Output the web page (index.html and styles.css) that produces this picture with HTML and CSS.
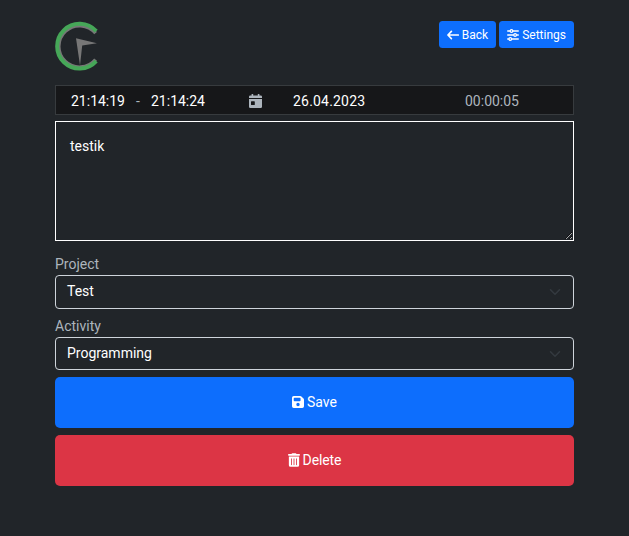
FILE: index.html
```html
<!DOCTYPE html>
<html lang="en">
<head>
<meta charset="utf-8">
<title>Time entry</title>
<link rel="stylesheet" href="styles.css">
</head>
<body>
<main class="page">
  <header class="header">
    <svg class="logo" viewBox="0 0 50 50">
      <path d="M40.6 12.2A20.8 20.8 0 1 0 40.6 38.6" fill="none" stroke="#777" stroke-width="3.6"/>
      <path d="M41.2 10.2A22.4 22.4 0 1 0 41.2 40.2" fill="none" stroke="#46a758" stroke-width="4"/>
      <path d="M21 17.3L42 22.2L27.2 24.5L25 44.5Z" fill="#777"/>
    </svg>
    <nav class="nav">
      <a class="btn btn-sm"><svg class="icon" viewBox="0 0 12 12"><path d="M4.4 2.4L.9 6L4.4 9.6M1.2 6H11.3" fill="none" stroke="currentColor" stroke-width="1.6" stroke-linecap="round" stroke-linejoin="round"/></svg>Back</a>
      <a class="btn btn-sm"><svg class="icon" viewBox="0 0 12 12" fill="none" stroke="currentColor" stroke-width="1.3" stroke-linecap="round"><path d="M.7 2H2.8M6.2 2H11.3M.7 6H6.4M9.8 6H11.3M.7 10H1.6M5 10H11.3"/><circle cx="4.5" cy="2" r="1.3"/><circle cx="8.1" cy="6" r="1.3"/><circle cx="3.3" cy="10" r="1.3"/></svg>Settings</a>
    </nav>
  </header>
  <section class="times">
    <span class="start">21:14:19</span>
    <span class="dash">-</span>
    <span class="end">21:14:24</span>
    <svg class="calendar" viewBox="0 0 13 14"><path fill="currentColor" fill-rule="evenodd" d="M2.6 0H4.2V1.5H8.8V0H10.4V1.5H11.7Q13 1.5 13 2.8V4H0V2.8Q0 1.5 1.3 1.5H2.6ZM0 5H13V12.7Q13 14 11.7 14H1.3Q0 14 0 12.7ZM2.6 7.2Q2 7.2 2 7.8V10.4Q2 11 2.6 11H5.2Q5.8 11 5.8 10.4V7.8Q5.8 7.2 5.2 7.2Z"/></svg>
    <span class="date">26.04.2023</span>
    <span class="duration">00:00:05</span>
  </section>
  <textarea class="note" spellcheck="false">testik</textarea>
  <label class="label">Project</label>
  <div class="select"><span>Test</span><svg class="chevron" viewBox="0 0 16 16"><path d="M2 5l6 6 6-6"/></svg></div>
  <label class="label label-activity">Activity</label>
  <div class="select select-activity"><span>Programming</span><svg class="chevron" viewBox="0 0 16 16"><path d="M2 5l6 6 6-6"/></svg></div>
  <button class="btn btn-lg"><svg class="save-icon" viewBox="0 0 448 448"><path fill="currentColor" fill-rule="evenodd" d="M64 0Q0 0 0 64V384Q0 448 64 448H384Q448 448 448 384V141Q448 116 429 97L351 19Q332 0 307 0ZM64 96Q64 64 96 64H288Q320 64 320 96V160Q320 192 288 192H96Q64 192 64 160ZM224 256A64 64 0 1 1 224 384A64 64 0 1 1 224 256Z"/></svg>Save</button>
  <button class="btn btn-lg btn-danger"><svg class="trash-icon" viewBox="0 0 448 512"><path fill="currentColor" fill-rule="evenodd" d="M135 18L128 32H32Q0 32 0 64Q0 96 32 96H416Q448 96 448 64Q448 32 416 32H320L313 18Q304 0 284 0H164Q144 0 135 18ZM32 128H416V448Q416 512 352 512H96Q32 512 32 448ZM112 208V432Q112 448 128 448Q144 448 144 432V208Q144 192 128 192Q112 192 112 208ZM208 208V432Q208 448 224 448Q240 448 240 432V208Q240 192 224 192Q208 192 208 208ZM304 208V432Q304 448 320 448Q336 448 336 432V208Q336 192 320 192Q304 192 304 208Z"/></svg>Delete</button>
</main>
</body>
</html>
```
FILE: styles.css
```css
* { box-sizing: border-box; }
body {
  margin: 0;
  height: 536px;
  overflow: hidden;
  background: #212529;
  color: #fff;
  font: 14px/21px Roboto, sans-serif;
}
.page {
  width: 519px;
  margin: 0 auto;
  padding-top: 21px;
  display: flex;
  flex-direction: column;
}
.header {
  display: flex;
  justify-content: space-between;
  align-items: flex-start;
  height: 64px;
}
.logo { width: 50px; height: 50px; }
.nav { display: flex; gap: 3px; }
.btn {
  display: flex;
  align-items: center;
  justify-content: center;
  gap: 3px;
  border: 0;
  border-radius: 4px;
  background: #0d6efd;
  color: #fff;
  font-family: inherit;
}
.btn-sm { height: 27px; padding: 0 8px; font-size: 12px; line-height: 18px; border-radius: 3.5px; }
.icon { width: 12px; height: 12px; }
.times {
  display: grid;
  grid-template-columns: 65px 15px 98px 44px 172px auto;
  align-items: center;
  height: 30px;
  padding: 2px 0 0 15px;
  border: 1px solid #373b3e;
  background: #161719;
}
.dash, .duration { color: #adb5bd; }
.date { letter-spacing: .2px; }
.calendar { width: 13px; height: 14px; margin: 0 0 1px -.5px; color: #adb5bd; }
.note {
  display: block;
  height: 120px;
  margin-top: 6px;
  padding: 14px;
  border: 1px solid #fff;
  border-radius: 0;
  outline: 0;
  background: #212529;
  color: #fff;
  font: inherit;
  resize: vertical;
}
.label { margin-top: 13px; color: #adb5bd; }
.label-activity { margin-top: 7px; }
.select {
  display: flex;
  align-items: center;
  justify-content: space-between;
  height: 34px;
  padding: 0 12px 1px 11px;
  border: 1px solid #ced4da;
  border-radius: 4px;
}
.select-activity { height: 33px; padding-bottom: 0; }
.chevron {
  width: 12px;
  height: 12px;
  fill: none;
  stroke: #343a40;
  stroke-width: 2;
  stroke-linecap: round;
  stroke-linejoin: round;
}
.btn-lg { height: 51px; margin-top: 7px; font-size: 14px; line-height: 21px; border-radius: 5px; }
.btn-danger { gap: 3px; letter-spacing: -.1px; background: #dc3545; }
.save-icon { width: 12px; height: 12px; margin-bottom: 1px; }
.trash-icon { width: 12px; height: 14px; margin-bottom: 1px; }
```
